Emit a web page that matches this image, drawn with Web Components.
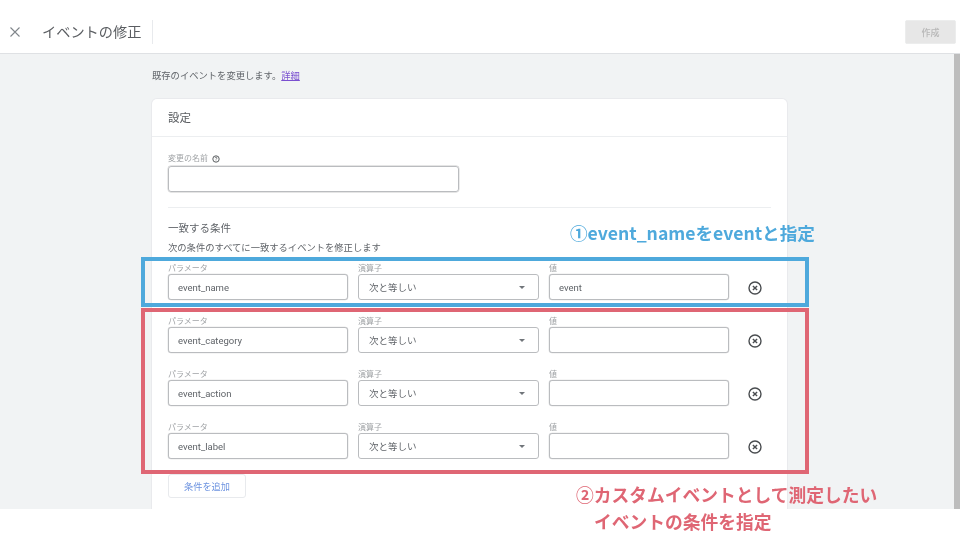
<!DOCTYPE html>
<html lang="ja"><head><meta charset="utf-8">
<style>
html,body{margin:0;padding:0;background:#fff}
body{font-family:Roboto,"Noto Sans CJK JP",sans-serif;color:#5f6368}
</style></head><body>
<event-editor></event-editor>
<script>
const JP='Roboto,"Noto Sans CJK JP",sans-serif';
function def(name,css,html){
  customElements.define(name,class extends HTMLElement{
    constructor(){super();this.attachShadow({mode:'open'}).innerHTML='<style>'+css+'</style>'+(typeof html==='function'?html(this):html);}
  });
}
def('top-bar',`
:host{display:flex;align-items:center;height:54px;background:#fff;border-bottom:1px solid #dfe1e4;box-sizing:border-box;padding:11px 4px 0 9px;font-family:${JP}}
svg{width:12px;height:12px;flex:none;display:block}
h1{font:400 14.2px/1 ${JP};color:#5a5d61;margin:0 0 0 21px;padding:0 11px 0 0;height:24px;line-height:24px;border-right:1px solid #e8eaed}
.sp{flex:1}
button{width:51px;height:24px;border:1px solid #eceded;border-radius:2px;background:#e7e7e7;color:#b7b7b7;font:500 9px ${JP};padding:0}
`,`<svg viewBox="0 0 12 12"><path d="M1.5 1.5l9 9M10.5 1.5l-9 9" stroke="#80868b" stroke-width="1.1" fill="none"/></svg>
<h1>イベントの修正</h1><div class="sp"></div><button>作成</button>`);

def('text-field',`
:host{display:block;flex:none;width:var(--w,180px)}
label{display:block;font:400 8px/10px ${JP};color:#a0a3a6;height:10px;margin:1px 0 0;white-space:nowrap}
.box{box-sizing:border-box;height:26px;border:1px solid #babcbf;border-radius:3px;background:#fff;display:flex;align-items:center;padding:1px 9px 0;font:400 9.5px ${JP};color:#5f6368;box-shadow:0 0 0 .3px #d5d6d8}
`,h=>`<label>${h.getAttribute('label')||''}</label><div class="box">${h.getAttribute('value')||''}</div>`);

def('select-field',`
:host{display:block;flex:none;width:181px}
label{display:block;font:400 8px/10px ${JP};color:#a0a3a6;height:10px;margin:1px 0 0}
.box{box-sizing:border-box;height:26px;border:1px solid #babcbf;border-radius:3px;background:#fff;display:flex;align-items:center;justify-content:space-between;padding:0 13px 0 10px;font:400 9.5px ${JP};color:#5f6368}
i{width:0;height:0;border:3px solid transparent;border-top:3.5px solid #70757a;border-bottom:0}
`,`<label>演算子</label><div class="box"><span>次と等しい</span><i></i></div>`);

def('cond-row',`
:host{display:flex;gap:10px;align-items:flex-start;height:37px;margin-bottom:16px}
svg{width:16px;height:16px;margin:17px 0 0 8px;flex:none}
`,h=>`<text-field label="パラメータ" value="${h.getAttribute('param')||''}"></text-field>
<select-field></select-field>
<text-field label="値" value="${h.getAttribute('val')||''}"></text-field>
<svg viewBox="0 0 16 16"><circle cx="8" cy="8" r="6" fill="none" stroke="#4a4d50" stroke-width="1.4"/><path d="M5.9 5.9l4.2 4.2M10.1 5.9l-4.2 4.2" stroke="#4a4d50" stroke-width="1.4" fill="none"/></svg>`);

def('settings-card',`
:host{display:block;width:635px;height:410px;background:#fff;border-radius:5px 5px 0 0;box-shadow:0 0 0 1px #e9eaed;overflow:hidden;font-family:${JP}}
header{height:38px;border-bottom:1px solid #eceef0;box-sizing:border-box;padding:0 16px 2px;display:flex;align-items:center;font:400 11.5px ${JP};color:#5a5d61}
.body{padding:17px 16px 0}
.name{font:400 8px/10px ${JP};color:#a0a3a6;display:flex;align-items:center;gap:4px;height:10px;margin-bottom:2px}
.name svg{width:8px;height:8px}
.nm{box-sizing:border-box;width:291px;height:26px;border:1px solid #babcbf;border-radius:3px;box-shadow:0 0 0 .4px #ccc}
hr{border:0;border-top:1px solid #eceef0;margin:15px 0 14px}
h2{font:400 10.5px/14px ${JP};color:#5f6368;margin:0 0 5px}
p{font:400 9.3px/13px ${JP};color:#5f6368;margin:0 0 9px;white-space:nowrap}
button{display:block;box-sizing:border-box;width:78px;height:24px;border:1px solid #e8eaed;border-radius:3px;background:#fff;color:#6d93e0;font:400 9.2px ${JP};padding:0;margin-top:-1px}
`,`<header>設定</header><div class="body">
<div class="name">変更の名前 <svg viewBox="0 0 8 8"><circle cx="4" cy="4" r="3.2" fill="none" stroke="#4a4d50" stroke-width=".9"/><path d="M3 3.1c0-1.3 2-1.3 2 0 0 .8-1 .7-1 1.5" fill="none" stroke="#4a4d50" stroke-width=".7"/><circle cx="4" cy="5.8" r=".4" fill="#4a4d50"/></svg></div>
<div class="nm"></div><hr>
<h2>一致する条件</h2><p>次の条件のすべてに一致するイベントを修正します</p>
<cond-row param="event_name" val="event"></cond-row>
<cond-row param="event_category"></cond-row>
<cond-row param="event_action"></cond-row>
<cond-row param="event_label"></cond-row>
<button>条件を追加</button></div>`);

def('note-box',`
:host{position:absolute;box-sizing:border-box;left:141px;width:668px;border:4px solid var(--c);pointer-events:none}
`,``);
def('note-text',`
:host{position:absolute;color:var(--c);font:700 var(--s,17.6px)/27px "Noto Sans CJK JP",sans-serif;white-space:nowrap}
`,`<slot></slot>`);

def('event-editor',`
:host{display:block;position:relative;width:960px;height:540px;overflow:hidden;background:#fff;font-family:${JP};filter:blur(.3px)}
main{height:455px;background:#f1f3f4;box-sizing:border-box;padding:15px 0 0 152px;position:relative;overflow:hidden}
.intro{font:400 9.3px/13px ${JP};color:#5f6368;margin-bottom:17px}
a{color:#7a4fd0;text-decoration:underline}
.bar{position:absolute;right:0;top:0;bottom:0;width:6px;background:#bdbdbd}
.ind{display:inline-block;width:18px}
`,`<top-bar></top-bar><main><div class="intro">既存のイベントを変更します。<a>詳細</a></div><settings-card></settings-card><div class="bar"></div></main>
<note-box style="--c:#4ea9dc;top:257px;height:50px"></note-box>
<note-box style="--c:#df6674;top:308px;height:166px"></note-box>
<note-text style="--c:#4ea9dc;left:570px;top:219px">①event_nameをeventと指定</note-text>
<note-text style="--c:#df6674;--s:17.75px;left:576px;top:481px">②カスタムイベントとして測定したい<br><span class="ind"></span>イベントの条件を指定</note-text>`);
</script></body></html>
